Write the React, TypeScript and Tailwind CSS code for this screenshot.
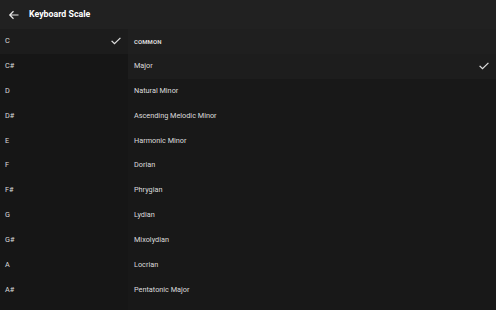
import React from 'react';

const NOTES = ['C', 'C#', 'D', 'D#', 'E', 'F', 'F#', 'G', 'G#', 'A', 'A#'];
const SCALES = ['Major', 'Natural Minor', 'Ascending Melodic Minor', 'Harmonic Minor', 'Dorian', 'Phrygian', 'Lydian', 'Mixolydian', 'Locrian', 'Pentatonic Major'];

const Check = () => (
  <svg width="12" height="12" viewBox="0 0 24 24" fill="none" stroke="#e0e0e0" strokeWidth="2.4" strokeLinecap="square">
    <path d="M4 12.5l5 5L20 6.5" />
  </svg>
);

export default function App() {
  return (
    <div className="w-[496px] h-[310px] overflow-hidden bg-[#161616] text-[#dcdcdc] flex flex-col" style={{ fontFamily: 'Roboto, "Liberation Sans", sans-serif' }}>
      {/* Header */}
      <div className="h-[29px] shrink-0 bg-[#212121] flex items-center pl-[8px] gap-[9px]">
        <svg width="12" height="12" viewBox="0 0 24 24" fill="none" stroke="#e8e8e8" strokeWidth="2.4">
          <path d="M21 12H4M11 4.5L3.5 12l7.5 7.5" />
        </svg>
        <span className="text-[8.8px] font-bold text-white">Keyboard Scale</span>
      </div>

      <div className="flex flex-1 min-h-0">
        {/* Notes */}
        <div className="w-[128px] shrink-0 bg-[#161616] flex flex-col">
          {NOTES.map((n, i) => (
            <div key={n} className={`h-[24.9px] shrink-0 flex items-center justify-between pl-[5px] pr-[6px] text-[7.3px] ${i === 0 ? 'bg-[#1c1c1c]' : ''}`}>
              <span>{n}</span>
              {i === 0 && <Check />}
            </div>
          ))}
        </div>

        {/* Scales */}
        <div className="flex-1 bg-[#181818] flex flex-col">
          <div className="h-[24.9px] shrink-0 bg-[#1f1f1f] flex items-center pl-[6px] text-[6px] font-bold tracking-[0.1px] text-[#d8d8d8]">COMMON</div>
          {SCALES.map((s, i) => (
            <div key={s} className={`h-[24.9px] shrink-0 flex items-center justify-between pl-[6px] pr-[6px] text-[7.3px] ${i === 0 ? 'bg-[#1d1d1d]' : ''}`}>
              <span>{s}</span>
              {i === 0 && <Check />}
            </div>
          ))}
        </div>
      </div>
    </div>
  );
}
